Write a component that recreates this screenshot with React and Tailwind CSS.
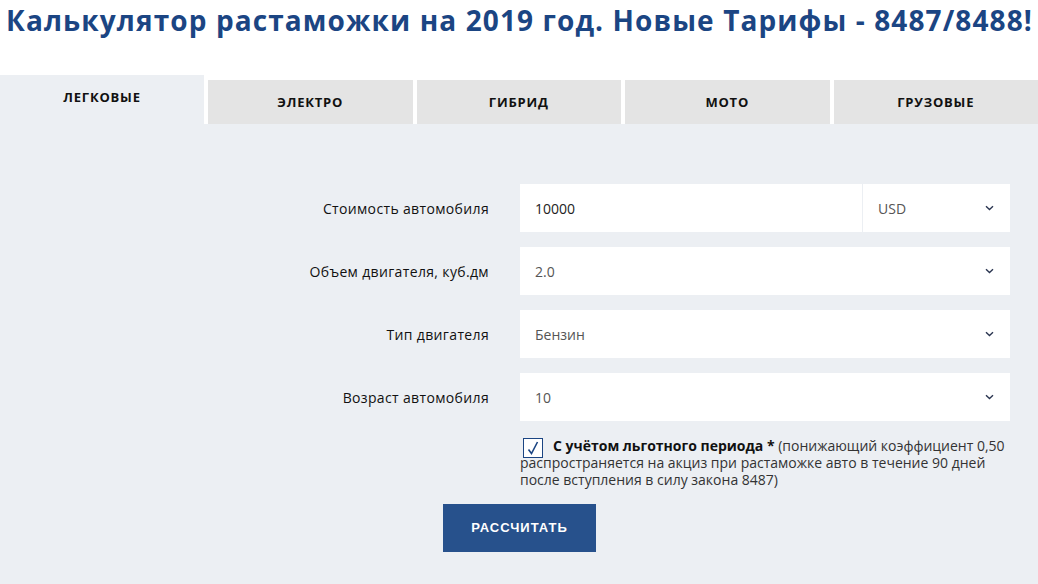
import { useState } from 'react';

const TABS = ['ЛЕГКОВЫЕ', 'ЭЛЕКТРО', 'ГИБРИД', 'МОТО', 'ГРУЗОВЫЕ'];

const FIELDS = [
  { label: 'Объем двигателя, куб.дм', value: '2.0' },
  { label: 'Тип двигателя', value: 'Бензин' },
  { label: 'Возраст автомобиля', value: '10' },
];

function Chevron() {
  return (
    <svg width="9" height="6" viewBox="0 0 9 6" fill="none" className="shrink-0">
      <path d="M1 1.2 L4.5 4.5 L8 1.2" stroke="#2a3550" strokeWidth="1.4" />
    </svg>
  );
}

function Row({ label, children }) {
  return (
    <div className="flex items-center">
      <div className="w-[490px] pr-[1px] text-right text-[14px] font-medium tracking-[0.35px] text-[#111]">{label}</div>
      <div className="ml-[30px] flex h-12 w-[490px] bg-white">{children}</div>
    </div>
  );
}

export default function App() {
  const [active, setActive] = useState(0);
  const [checked, setChecked] = useState(true);

  return (
    <div className="h-[584px] w-[1038px] overflow-hidden bg-white" style={{ fontFamily: '"Open Sans", "Noto Sans", sans-serif' }}>
      <h1 className="whitespace-nowrap pl-[6px] pt-[1px] text-[28px] font-bold leading-[38px] tracking-[1.1px] text-[#1b4583]">
        Калькулятор растаможки на 2019 год. Новые Тарифы - 8487/8488!
      </h1>

      <div className="mt-[36px] flex h-[49px] items-end gap-[4px]">
        {TABS.map((t, i) => (
          <button
            key={t}
            type="button"
            onClick={() => setActive(i)}
            className={`flex flex-1 justify-center text-[13px] font-bold tracking-[0.8px] text-[#111] ${
              i === active ? 'h-[49px] items-start bg-[#eceff3] pt-[13px]' : 'h-[44px] items-center bg-[#e4e4e4] pt-[1px]'
            } ${i === 0 ? 'max-w-[204px]' : ''}`}
          >
            {t}
          </button>
        ))}
      </div>

      <div className="h-[460px] bg-[#eceff3] pt-[60px]">
        <div className="flex flex-col gap-[15px]">
          <Row label="Стоимость автомобиля">
            <div className="flex flex-1 items-center pl-[15px] text-[14px] text-[#222]">10000</div>
            <div className="flex w-[148px] items-center justify-between border-l border-[#eceff3] pl-[15px] pr-[16px] text-[14px] text-[#555]">
              <span>USD</span>
              <Chevron />
            </div>
          </Row>
          {FIELDS.map((f) => (
            <Row key={f.label} label={f.label}>
              <div className="flex flex-1 items-center justify-between pl-[15px] pr-[16px] text-[14px] text-[#555]">
                <span>{f.value}</span>
                <Chevron />
              </div>
            </Row>
          ))}
        </div>

        <div className="ml-[520px] mt-[13px] w-[495px] text-[14px] leading-[17px] text-[#333]">
          <button
            type="button"
            onClick={() => setChecked(!checked)}
            className="relative top-[4px] mr-[10px] ml-[3px] inline-flex h-[20px] w-[20px] items-center justify-center border-[1.5px] border-[#1b4583] bg-white align-baseline"
          >
            {checked && (
              <svg width="12" height="14" viewBox="0 0 12 14" fill="none">
                <path d="M1.5 8.5 L4.5 12.5 L10.5 1" stroke="#1b4583" strokeWidth="1.6" />
              </svg>
            )}
          </button>
          <b className="font-bold text-[#111]">С учётом льготного периода *</b> (понижающий коэффициент 0,50 распространяется на акциз при растаможке авто в течение 90 дней после вступления в силу закона 8487)
        </div>

        <div className="ml-[443px] mt-[16px]">
          <button
            type="button"
            className="h-12 w-[153px] bg-[#27518c] text-[13px] font-bold tracking-[1px] text-white"
            style={{ fontFamily: '"Liberation Sans", Arial, sans-serif' }}
          >
            РАССЧИТАТЬ
          </button>
        </div>
      </div>
    </div>
  );
}
